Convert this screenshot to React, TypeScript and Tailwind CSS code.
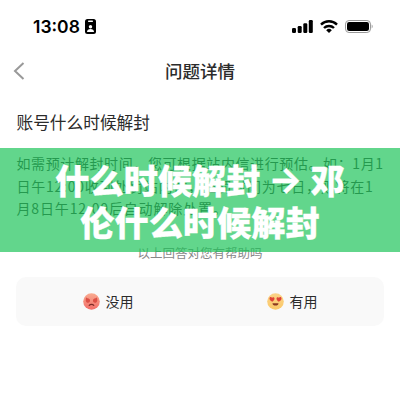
import React from "react";

const answerLines = [
  { text: "如需预计解封时间，您可根据站内信进行预估。如：1月1", className: "tracking-[0.6px]" },
  { text: "日午12:00收到处罚站内信，处罚时间为七日，则将在1", className: "tracking-[0.75px]" },
  { text: "月8日午12:00后自动解除处置。", className: "tracking-[0.85px]" },
];

const StatusBar: React.FC = () => {
  return (
    <div className="flex h-[53px] items-center justify-between pl-[33px] pr-[27px] text-black">
      <div className="flex items-center gap-[5px]">
        <span className="font-['Inter'] text-[17.5px] font-semibold leading-none">
          13:08
        </span>
        <svg className="h-[15px] w-[11px]" viewBox="0 0 11 15">
          <rect width="11" height="15" rx="2.5" fill="#000" />
          <rect x="3" y="1.6" width="5" height="1.3" rx="0.6" fill="#fff" />
          <circle cx="5.5" cy="7.7" r="1.7" fill="#fff" />
          <path d="M2 13c0-2 1.5-3 3.5-3S9 11 9 13z" fill="#fff" />
        </svg>
      </div>
      <div className="flex items-center">
        <svg className="h-[13px] w-[21px]" viewBox="0 0 21 13">
          <rect x="0" y="8" width="4" height="5" rx="1.2" />
          <rect x="5.7" y="6" width="4" height="7" rx="1.2" />
          <rect x="11.3" y="3.2" width="4" height="9.8" rx="1.2" />
          <rect x="16.8" y="0" width="4" height="13" rx="1.2" />
        </svg>
        <svg
          className="ml-[7px] h-[13px] w-[18px]"
          viewBox="0 0 18 13"
          fill="none"
          stroke="#000"
          strokeWidth="2.4"
        >
          <path d="M1 4.6a11.4 11.4 0 0 1 16 0" />
          <path d="M4 8a7.1 7.1 0 0 1 10 0" />
          <path d="M9 13 6.2 10.2a4 4 0 0 1 5.6 0z" fill="#000" stroke="none" />
        </svg>
        <svg className="ml-[7px] h-[13px] w-[28px]" viewBox="0 0 28 13">
          <rect x="0.5" y="0.5" width="25" height="12" rx="3.6" fill="none" stroke="#999" />
          <rect x="2" y="2" width="22" height="9" rx="2.2" />
          <path d="M26.7 4.6c1.3.5 1.3 3.3 0 3.8z" fill="#999" />
        </svg>
      </div>
    </div>
  );
};

const AngryIcon: React.FC = () => {
  return (
    <svg className="h-[17px] w-[17px]" viewBox="0 0 17 17">
      <defs>
        <linearGradient id="angry" x1="0" y1="0" x2="0" y2="1">
          <stop offset="0" stopColor="#f9ab90" />
          <stop offset="1" stopColor="#f26d68" />
        </linearGradient>
      </defs>
      <circle cx="8.5" cy="8.5" r="8.3" fill="url(#angry)" />
      <path
        d="M3 4.6c1 .1 1.3.7 2 .9.8-.2 1.2.4 2 1.3.3 1.9-.6 3-2 3S2.7 8.7 2.7 7.2z"
        fill="#dc4f45"
      />
      <path
        d="M14 4.6c-1 .1-1.3.7-2 .9-.8-.2-1.2.4-2 1.3-.3 1.9.6 3 2 3s2.3-1.1 2.3-2.6z"
        fill="#dc4f45"
      />
      <path
        d="M6.2 12.3c1.1-1.2 3.5-1.2 4.6 0"
        fill="none"
        stroke="#7d2b26"
        strokeWidth="1.2"
        strokeLinecap="round"
      />
    </svg>
  );
};

const LoveIcon: React.FC = () => {
  return (
    <svg className="h-[17px] w-[17px]" viewBox="0 0 17 17">
      <defs>
        <linearGradient id="love" x1="0" y1="0" x2="0" y2="1">
          <stop offset="0" stopColor="#fbd287" />
          <stop offset="1" stopColor="#fbc968" />
        </linearGradient>
      </defs>
      <circle cx="8.5" cy="8.5" r="8.3" fill="url(#love)" />
      <path
        d="M5.3 8.7C3.5 8 2.3 6.7 2.5 5.2c.2-1.3 1.8-1.6 2.5-.5.9-1 2.5-.5 2.5.8 0 1.4-.9 2.5-2.2 3.2z"
        fill="#df4438"
      />
      <path
        d="M11.7 8.7c1.8-.7 3-2 2.8-3.5-.2-1.3-1.8-1.6-2.5-.5-.9-1-2.5-.5-2.5.8 0 1.4.9 2.5 2.2 3.2z"
        fill="#df4438"
      />
      <path d="M5.5 10.2h6c0 1.6-1.2 2.4-3 2.4s-3-.8-3-2.4z" fill="#8c3a1f" />
    </svg>
  );
};

const App: React.FC = () => {
  return (
    <div className="relative h-[400px] w-[400px] overflow-hidden bg-white font-['Noto_Sans_CJK_SC',sans-serif] text-[#2b2b2b]">
      <StatusBar />

      <header className="grid h-[36px] grid-cols-[60px_1fr_60px] items-center">
        <svg
          className="ml-[13px] h-[18px] w-[12px]"
          viewBox="0 0 12 18"
          fill="none"
          stroke="#999"
          strokeWidth="2"
        >
          <path d="M10.5 1 2 9l8.5 8" />
        </svg>
        <h1 className="text-center text-[17.5px] font-medium leading-none">问题详情</h1>
      </header>

      <main className="px-4">
        <h2 className="mt-[22px] pl-[0.5px] text-[16.7px] leading-[22px]">账号什么时候解封</h2>
        <div className="mt-[19px] pl-[0.5px] text-[14px] leading-[22.7px] text-[#333]">
          {answerLines.map((line) => (
            <p key={line.text} className={`whitespace-nowrap ${line.className}`}>
              {line.text}
            </p>
          ))}
        </div>
        <p className="mt-[23px] text-center text-[12.5px] leading-[20px] text-[#888]">
          以上回答对您有帮助吗
        </p>
        <div className="mt-[14px] grid h-[49px] grid-cols-2 rounded-[10px] bg-[#f9f9f9] text-[14px]">
          <button className="flex items-center justify-center gap-[6px]">
            <AngryIcon />
            没用
          </button>
          <button className="flex items-center justify-center gap-[6px]">
            <LoveIcon />
            有用
          </button>
        </div>
      </main>

      <div className="absolute inset-x-0 top-[148px] h-[104px] bg-[#1fc45b]/70 pt-[10px] text-center text-[34.2px] font-black leading-[42px] text-white [-webkit-text-stroke:0.3px_white]">
        <p className="flex justify-center">
          什么时候解封
          <span className="flex w-[50px] justify-center font-['Inter'] text-[36px] font-bold">→</span>
          邓
        </p>
        <p>伦什么时候解封</p>
      </div>
    </div>
  );
};

export default App;
